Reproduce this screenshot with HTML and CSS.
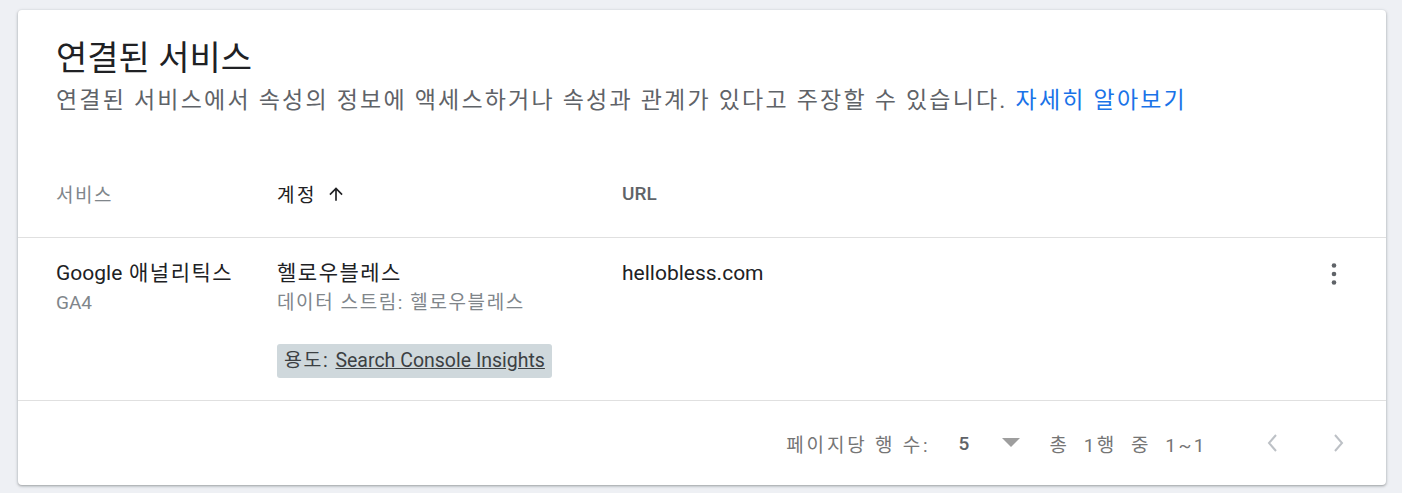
FILE: index.html
```html
<!DOCTYPE html>
<html lang="ko">
<head>
<meta charset="utf-8">
<title>연결된 서비스</title>
<link rel="stylesheet" href="styles.css">
</head>
<body>
<div class="card">
  <div class="card-head">
    <h1 class="title">연결된 서비스</h1>
    <p class="desc">연결된 서비스에서 속성의 정보에 액세스하거나 속성과 관계가 있다고 주장할 수 있습니다. <a class="link" href="#">자세히 알아보기</a></p>
  </div>
  <div class="table">
    <div class="row head-row">
      <div class="cell th muted">서비스</div>
      <div class="cell th active">계정 <svg class="sort" viewBox="0 0 24 24" width="20" height="20"><path d="M4 12l1.41 1.41L11 7.83V20h2V7.83l5.58 5.59L20 12l-8-8-8 8z" fill="#202124"/></svg></div>
      <div class="cell th url">URL</div>
      <div class="cell"></div>
    </div>
    <div class="row data-row">
      <div class="cell">
        <div class="main"><span class="lat">Google</span> 애널리틱스</div>
        <div class="sub"><span class="lat">GA4</span></div>
      </div>
      <div class="cell">
        <div class="main">헬로우블레스</div>
        <div class="sub">데이터 스트림: 헬로우블레스</div>
        <div class="chip">용도: <a href="#" class="chip-link lat">Search Console Insights</a></div>
      </div>
      <div class="cell">
        <div class="main"><span class="lat">hellobless.com</span></div>
      </div>
      <div class="cell menu-cell">
        <svg class="kebab" viewBox="0 0 6 24" width="6" height="24"><circle cx="3" cy="3.5" r="2.3" fill="#5f6368"/><circle cx="3" cy="12" r="2.3" fill="#5f6368"/><circle cx="3" cy="20.5" r="2.3" fill="#5f6368"/></svg>
      </div>
    </div>
  </div>
  <div class="footer">
    <span class="rpp">페이지당 행 수:</span>
    <span class="rpp-select"><span class="rpp-val">5</span><svg class="caret" viewBox="0 0 18 10" width="18" height="10"><path d="M0 0h18L9 9z" fill="#9e9e9e"/></svg></span>
    <span class="range">총 1행 중 1~1</span>
    <span class="pager">
      <svg viewBox="0 0 12 20" width="12" height="20"><path d="M10 2L3 10l7 8" fill="none" stroke="#bdc1c6" stroke-width="2"/></svg>
      <svg viewBox="0 0 12 20" width="12" height="20"><path d="M2 2l7 8-7 8" fill="none" stroke="#bdc1c6" stroke-width="2"/></svg>
    </span>
  </div>
</div>
</body>
</html>
```

FILE: styles.css
```css
* { box-sizing: border-box; }
html, body { margin: 0; }
body {
  background: #eef0f4;
  padding: 10px 16px 8px 18px;
  font-family: Roboto, "Noto Sans CJK KR", sans-serif;
  color: #202124;
}
.card {
  width: 1368px;
  height: 475px;
  background: #fff;
  border-radius: 4px;
  box-shadow: 0 1px 2px rgba(60,64,67,0.3), 0 1px 3px 1px rgba(60,64,67,0.15);
  display: flex;
  flex-direction: column;
}
.card-head {
  padding: 26px 38px 0;
  height: 140px;
}
.title {
  margin: 0;
  font-size: 34px;
  font-weight: 400;
  line-height: 44px;
  color: #202124;
}
.desc {
  margin: 6px 0 0;
  font-size: 23px;
  line-height: 30px;
  letter-spacing: 2.2px;
  color: #5f6368;
}
.link { color: #1a73e8; text-decoration: none; }
.lat { letter-spacing: 0; }
.table { display: flex; flex-direction: column; }
.row {
  display: grid;
  grid-template-columns: 221px 345px 1fr 48px;
  padding-left: 38px;
  padding-right: 28px;
  border-bottom: 1px solid #e0e0e0;
}
.head-row {
  height: 88px;
  align-items: center;
  font-size: 19px;
  letter-spacing: 1.5px;
}
.th { display: flex; align-items: center; gap: 6px; }
.muted { color: #80868b; }
.active { color: #202124; letter-spacing: 2.5px; gap: 9px; }
.url { color: #5f6368; font-weight: 500; font-size: 19px; letter-spacing: 0; }
.sort { display: block; }
.data-row {
  padding-top: 20px;
  padding-bottom: 22px;
  height: 163px;
  line-height: 30px;
}
.main { color: #202124; font-size: 21px; letter-spacing: 1.5px; }
.sub { color: #80868b; font-size: 19px; letter-spacing: 1.6px; }
.chip {
  display: inline-block;
  margin-top: 26px;
  height: 34px;
  line-height: 34px;
  padding: 0 7px;
  background: #cfd8dc;
  border-radius: 3px;
  color: #3c4043;
  font-size: 19.5px;
  letter-spacing: 1.5px;
}
.chip-link { color: #3c4043; text-decoration: underline; }
.menu-cell { display: flex; justify-content: center; padding-top: 4px; }
.kebab { display: block; }
.footer {
  flex: 1;
  display: flex;
  align-items: center;
  justify-content: flex-end;
  padding-right: 41px;
  font-size: 19px;
  color: #757575;
}
.rpp { letter-spacing: 2.8px; }
.rpp-select { display: flex; align-items: center; margin-left: 28px; }
.rpp-val { color: #5f6368; font-weight: 500; width: 44px; }
.caret { display: block; }
.range { margin-left: 29px; letter-spacing: 2.5px; word-spacing: 7px; }
.pager { display: flex; gap: 55px; margin-left: 59px; }
.pager svg { display: block; }
```
